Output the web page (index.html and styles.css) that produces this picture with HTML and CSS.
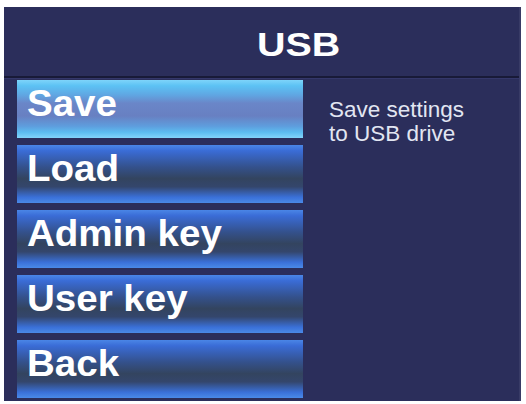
FILE: index.html
```html
<!DOCTYPE html>
<html>
<head>
<meta charset="utf-8">
<link rel="stylesheet" href="styles.css">
</head>
<body>
<div class="panel">
  <div class="header"><span class="title">USB</span></div>
  <div class="content">
    <div class="menu">
      <div class="btn selected"><span class="label">Save</span></div>
      <div class="btn"><span class="label">Load</span></div>
      <div class="btn"><span class="label">Admin key</span></div>
      <div class="btn"><span class="label">User key</span></div>
      <div class="btn"><span class="label">Back</span></div>
    </div>
    <div class="desc">Save settings<br>to USB drive</div>
  </div>
</div>
</body>
</html>
```

FILE: styles.css
```css
html, body {
  margin: 0;
  padding: 0;
  background: #ffffff;
}
body {
  width: 526px;
  height: 404px;
  overflow: hidden;
  font-family: "Liberation Sans", Arial, sans-serif;
}
.panel {
  margin: 7px 0 0 4px;
  width: 515px;
  height: 394px;
  background: #2b2e5b;
  border-right: 2px solid #383b66;
  display: flex;
  flex-direction: column;
}
.header {
  height: 69px;
  border-bottom: 2px solid #181a38;
  box-shadow: 0 1px 0 #34376a;
  display: flex;
  align-items: flex-start;
  justify-content: flex-start;
}
.title {
  display: inline-block;
  margin: 17px 0 0 253px;
  color: #ffffff;
  font-weight: bold;
  font-size: 34px;
  line-height: 40px;
  transform: scaleX(1.16);
  transform-origin: left center;
}
.content {
  display: flex;
  flex-direction: row;
  padding: 2px 0 0 13px;
}
.menu {
  width: 286px;
  display: flex;
  flex-direction: column;
  gap: 7px;
}
.btn {
  height: 58px;
  box-sizing: border-box;
  padding: 4px 0 0 10px;
  background: linear-gradient(to bottom,
    #4a86e6 0%,
    #3a6cd6 10%,
    #34518c 38%,
    #33445f 58%,
    #34466c 72%,
    #3a70d8 90%,
    #4a8ae8 100%);
  overflow: hidden;
}
.btn.selected {
  background: linear-gradient(to bottom,
    #7ed4fa 0%,
    #5cc2f4 10%,
    #60a6e2 26%,
    #6a86c8 40%,
    #6880c2 62%,
    #5e9ede 80%,
    #5cbcf0 90%,
    #82d4fa 100%);
}
.label {
  display: inline-block;
  color: #ffffff;
  font-weight: bold;
  font-size: 36px;
  line-height: 40px;
  white-space: nowrap;
  transform: scaleX(1.07);
  transform-origin: left center;
}
.desc {
  margin: 18px 0 0 26px;
  color: #e2e6f2;
  font-size: 22.5px;
  line-height: 24px;
}
```
